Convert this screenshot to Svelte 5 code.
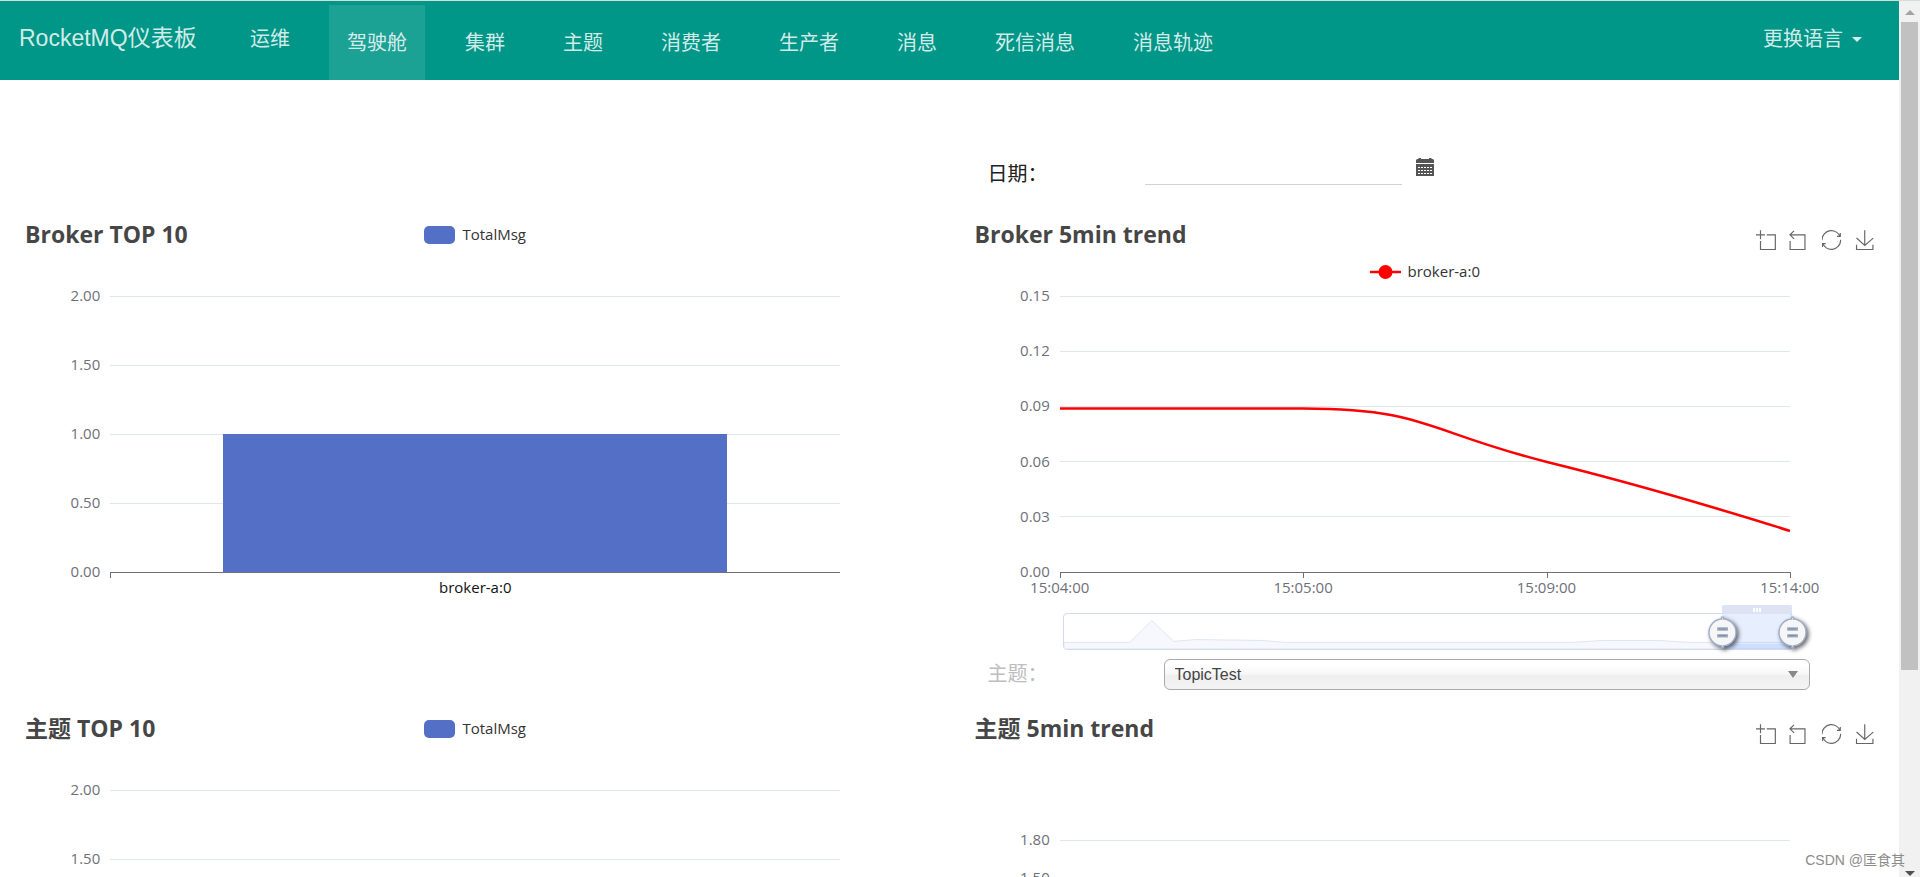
<script>
  const navItems = ['驾驶舱', '集群', '主题', '消费者', '生产者', '消息', '死信消息', '消息轨迹'];
  let active = $state('驾驶舱');
  let topic = $state('TopicTest');

  const tools = [
    { name: 'Area zoom', box: '0 -1 60 60', d: 'M0,13.5h26.9 M13.5,26.9V0 M32.1,13.5H58V58H13.5V32.1' },
    { name: 'Restore area zoom', box: '7 -1 60 60', d: 'M22,1.4L9.9,13.5l12.3,12.3 M10.3,13.5H54.9v44.6H10.3v-26' },
    {
      name: 'Restore',
      box: '2 0 60 60',
      d: 'M47,18.9h9.8V8.7 M56.3,20.1C52.1,9,40.5,0.6,26.8,2.1C12.6,3.7,1.6,16.2,2.1,30.6 M13,41.1H3.1v10.2 M3.7,39.9c4.2,11.1,15.8,19.5,29.5,18c14.2-1.6,25.2-14.1,24.7-28.5'
    },
    { name: 'Save as image', box: '0 -1 60 60', d: 'M4.7,22.9L29.3,45.5L54.7,23.4M4.6,43.6L4.6,58L53.8,58L53.8,43.6M29.2,45.1L29.2,0' }
  ];

  const barTicks = ['2.00', '1.50', '1.00', '0.50', '0.00'];
  const trendTicks = ['0.15', '0.12', '0.09', '0.06', '0.03', '0.00'];
  const topicTicks = ['1.80', '1.50', '1.20', '0.90', '0.60', '0.30', '0.00'];
  const times = ['15:04:00', '15:05:00', '15:09:00', '15:14:00'];
  const zoomRange = { start: 90.4, end: 100 };
  const handle =
    'M10.7,11.9v-1.3H9.3v1.3c-4.9,0.3-8.8,4.4-8.8,9.4c0,5,3.9,9.1,8.8,9.4v1.3h1.3v-1.3c4.9-0.3,8.8-4.4,8.8-9.4C19.5,16.3,15.6,12.2,10.7,11.9z M13.3,24.4H6.7V23h6.6V24.4z M13.3,19.6H6.7v-1.4h6.6V19.6z';
</script>

{#snippet toolbox()}
  <div class="toolbox">
    {#each tools as tool}
      <button type="button" aria-label={tool.name}>
        <svg viewBox={tool.box} width="20" height="20"><path d={tool.d} /></svg>
      </button>
    {/each}
  </div>
{/snippet}

{#snippet yLabels(ticks)}
  <div class="y-labels">
    {#each ticks as tick}<span>{tick}</span>{/each}
  </div>
{/snippet}

{#snippet gridLines(ticks)}
  {#each ticks.slice(0, -1) as _, i}
    <line x1="0" x2="730" y1={(i * 276) / (ticks.length - 1)} y2={(i * 276) / (ticks.length - 1)} class="split" />
  {/each}
{/snippet}

{#snippet barChart(title)}
  <section class="chart">
    <div class="head">
      <h2>{title}</h2>
      <div class="legend"><i class="swatch"></i><span>TotalMsg</span></div>
    </div>
    <div class="plot">
      {@render yLabels(barTicks)}
      <svg class="canvas" viewBox="0 0 730 276" preserveAspectRatio="none">
        {@render gridLines(barTicks)}
        <rect x="113" y="138" width="504" height="138" fill="#5470c6" />
        <path class="axis" d="M0,276H730M0,276V282" />
      </svg>
    </div>
    <div class="x-labels single"><span>broker-a:0</span></div>
  </section>
{/snippet}

<div class="shell">
  <div class="page">
    <nav>
      <a class="brand" href="#home">RocketMQ仪表板</a>
      <a class="item ops" href="#ops">运维</a>
      <div class="menu">
        {#each navItems as item}
          <a class="item" class:active={item === active} href="#{item}" onclick={() => (active = item)}>{item}</a>
        {/each}
      </div>
      <button class="lang" type="button">更换语言<i class="caret"></i></button>
    </nav>

    <main>
      <div class="date-row">
        <label for="date">日期：</label>
        <input id="date" type="text" />
        <svg class="calendar" viewBox="0 0 18 18" width="18" height="18">
          <path d="M0,5V2.5Q0,1 1.5,1H2.5V0H5V1H13V0H15.500V1H16.500Q18,1 18,2.500V5Z" fill="#555" />
          <path d="M0,6H18V18H0Z" fill="#555" />
          <path d="M2,9.500H16M2,12.500H16M2,15.500H16" stroke="#fff" stroke-width="1" stroke-dasharray="2 1" />
        </svg>
      </div>

      {@render barChart('Broker TOP 10')}

      <section class="chart">
        <div class="head">
          <h2>Broker 5min trend</h2>
          <div class="legend lower">
            <svg width="31" height="14" viewBox="0 0 31 14">
              <path d="M0,7H31" stroke="#f00" stroke-width="2.500" />
              <circle cx="15.500" cy="7" r="7" fill="#f00" />
            </svg>
            <span>broker-a:0</span>
          </div>
          {@render toolbox()}
        </div>
        <div class="plot">
          {@render yLabels(trendTicks)}
          <svg class="canvas" viewBox="0 0 730 276" preserveAspectRatio="none">
            {@render gridLines(trendTicks)}
            <path class="axis" d="M0,276H730M0,276V282M243,276V282M487,276V282M730,276V282" />
            <path class="trend" d="M0,112.500H243C365,112.500 365,135 487,166C609,196 730,235 730,235" />
          </svg>
        </div>
        <div class="x-labels">
          {#each times as time}<span>{time}</span>{/each}
        </div>
        <div class="zoom">
          <svg class="shadow" viewBox="0 0 730 37" preserveAspectRatio="none">
            <path
              d="M0,30H66L88,7L110,29L132,27L199,28L221,30H510L540,28L597,28L625,30H730V37H0Z"
              fill="#f6f8fd"
              stroke="#dfe5f4"
              vector-effect="non-scaling-stroke"
            />
          </svg>
          <div class="selection" style="left:{zoomRange.start}%;right:{100 - zoomRange.end}%">
            <div class="grip"><i></i><i></i><i></i></div>
          </div>
          {#each [zoomRange.start, zoomRange.end] as pos}
            <svg class="handle" style="left:{pos}%" viewBox="-3 7 28 28" width="40" height="40">
              <path d={handle} />
            </svg>
          {/each}
        </div>
      </section>

      <div class="topic-row">
        <label for="topic">主题：</label>
        <div class="select">
          <select id="topic" bind:value={topic}>
            <option>TopicTest</option>
          </select>
        </div>
      </div>

      {@render barChart('主题 TOP 10')}

      <section class="chart topic-trend">
        <div class="head">
          <h2>主题 5min trend</h2>
          {@render toolbox()}
        </div>
        <div class="plot">
          {@render yLabels(topicTicks)}
          <svg class="canvas" viewBox="0 0 730 276" preserveAspectRatio="none">
            {@render gridLines(topicTicks)}
            <path class="axis" d="M0,276H730" />
          </svg>
        </div>
      </section>
    </main>
  </div>

  <div class="scrollbar" aria-hidden="true">
    <svg width="10" height="5" viewBox="0 0 10 5"><path d="M0,5L5,0L10,5Z" fill="#a3a3a3" /></svg>
    <div class="track"><div class="thumb"></div></div>
    <svg width="10" height="5" viewBox="0 0 10 5"><path d="M0,0L5,5L10,0Z" fill="#505050" /></svg>
  </div>

  <div class="watermark">CSDN @匡食其</div>
</div>

<style>
  :global(body) {
    margin: 0;
    overflow: hidden;
    background: #fff;
  }
  .shell {
    position: relative;
    display: flex;
    height: 100vh;
    overflow: hidden;
    border-top: 1px solid #d5dcda;
    box-sizing: border-box;
    font-family: 'Open Sans', 'Noto Sans CJK SC', sans-serif;
    font-size: 15px;
    color: #333;
  }
  .page {
    flex: 1;
    min-width: 0;
    overflow: hidden;
  }
  button {
    border: 0;
    padding: 0;
    background: none;
    font: inherit;
    color: inherit;
  }

  nav {
    display: flex;
    align-items: flex-start;
    height: 79px;
    background: #009688;
    font-family: 'Liberation Sans', 'Noto Sans CJK SC', sans-serif;
    font-size: 20px;
    line-height: 76px;
    color: rgba(255, 255, 255, 0.84);
  }
  nav a {
    color: inherit;
    text-decoration: none;
    white-space: nowrap;
  }
  .brand {
    width: 212px;
    padding-left: 19px;
    box-sizing: border-box;
    font-size: 23px;
    line-height: 74px;
  }
  .item {
    padding: 0 18px;
  }
  .ops {
    margin: 0 21px 0 20px;
  }
  .menu {
    display: flex;
    gap: 22px;
    padding-top: 4px;
  }
  .menu .item {
    height: 75px;
  }
  .active {
    background: rgba(255, 255, 255, 0.11);
  }
  .lang {
    display: flex;
    align-items: center;
    gap: 9px;
    margin-left: auto;
    padding-right: 37px;
  }
  .caret {
    border: 5px solid transparent;
    border-top-color: rgba(255, 255, 255, 0.84);
    border-bottom: 0;
  }

  main {
    display: grid;
    grid-template-columns: 1fr 1fr;
    grid-template-rows: 141px 426px 68px auto;
  }
  .date-row,
  .topic-row {
    grid-column: 2;
    display: flex;
    align-items: flex-start;
    padding-left: 38px;
    font-family: 'Liberation Sans', 'Noto Sans CJK SC', sans-serif;
    font-size: 20px;
    line-height: 32px;
  }
  .date-row {
    padding-top: 78px;
  }
  .date-row label {
    width: 157px;
    color: #212121;
  }
  .date-row input {
    width: 257px;
    height: 26px;
    margin-right: 14px;
    padding: 0;
    border: 0;
    border-bottom: 1px solid #d2d2d2;
    background: none;
    outline: 0;
    font: inherit;
  }
  .topic-row {
    padding-top: 12px;
    padding-right: 89px;
  }
  .topic-row label {
    width: 176px;
    line-height: 30px;
    color: #bdbdbd;
  }
  .select {
    position: relative;
    flex: 1;
  }
  .select::after {
    content: '';
    position: absolute;
    right: 12px;
    top: 12px;
    border: 5px solid transparent;
    border-top: 7px solid #888;
    border-bottom: 0;
    pointer-events: none;
  }
  select {
    display: block;
    width: 100%;
    height: 31px;
    padding: 0 10px;
    appearance: none;
    border: 1px solid #aaa;
    border-radius: 6px;
    background: linear-gradient(#fff 20%, #f6f6f6 50%, #eee 52%, #f4f4f4 100%);
    font-family: 'Liberation Sans', sans-serif;
    font-size: 16px;
    color: #444;
  }

  .chart {
    min-width: 0;
    margin: 0 18px 0 19px;
  }
  .head {
    display: grid;
    grid-template-columns: 1fr auto 1fr;
    align-items: start;
    height: 75px;
  }
  h2 {
    margin: 0;
    padding-left: 6px;
    font-size: 23px;
    font-weight: 700;
    line-height: 26px;
    white-space: nowrap;
    color: #464646;
  }
  .legend {
    display: flex;
    align-items: center;
    gap: 7px;
    height: 28px;
  }
  .legend span {
    padding-bottom: 2px;
  }
  .lower {
    margin-top: 37px;
  }
  .swatch {
    width: 31px;
    height: 18px;
    border-radius: 5px;
    background: #5470c6;
  }
  .toolbox {
    grid-column: 3;
    display: flex;
    justify-content: flex-end;
    gap: 13px;
    padding: 9px 6px 0 0;
  }
  .toolbox svg {
    display: block;
    fill: none;
    stroke: #666;
    stroke-width: 3.500;
  }
  .plot {
    display: grid;
    grid-template-columns: 10% 80% 10%;
    height: 276px;
  }
  .y-labels {
    display: flex;
    flex-direction: column;
    justify-content: space-between;
    margin: -1px 0 1px;
    padding-right: 10px;
    text-align: right;
    color: #6e7079;
  }
  .y-labels span {
    display: flex;
    align-items: center;
    justify-content: flex-end;
    height: 0;
  }
  .canvas {
    display: block;
    width: 100%;
    height: 100%;
    min-height: 0;
    overflow: visible;
  }
  .split {
    stroke: #e0e6f1;
    vector-effect: non-scaling-stroke;
    shape-rendering: crispEdges;
  }
  .axis {
    fill: none;
    stroke: #6e7079;
    vector-effect: non-scaling-stroke;
    shape-rendering: crispEdges;
  }
  .trend {
    fill: none;
    stroke: #f00;
    stroke-width: 2.500;
    vector-effect: non-scaling-stroke;
  }
  .x-labels {
    display: flex;
    justify-content: space-between;
    padding: 4px 10% 0;
    line-height: 22px;
    white-space: nowrap;
    color: #6e7079;
  }
  .x-labels span {
    display: flex;
    justify-content: center;
    width: 0;
  }
  .x-labels.single {
    justify-content: center;
    color: #111;
  }
  .zoom {
    position: relative;
    box-sizing: border-box;
    width: 80%;
    height: 37px;
    margin: 15px 0 0 calc(10% + 3px);
    border: 1px solid #d2dbee;
    border-radius: 4px;
  }
  .shadow {
    display: block;
    width: 100%;
    height: 35px;
  }
  .selection {
    position: absolute;
    top: -9px;
    bottom: 0;
    background: linear-gradient(rgba(135, 175, 255, 0.2) 39px, rgba(135, 175, 255, 0.36) 39px);
  }
  .grip {
    display: flex;
    align-items: center;
    justify-content: center;
    gap: 1px;
    height: 9px;
    border-radius: 3px 3px 0 0;
    background: #dde3f3;
  }
  .grip i {
    width: 2px;
    height: 4px;
    background: #fff;
  }
  .handle {
    position: absolute;
    top: -2px;
    margin-left: -18px;
    overflow: visible;
    filter: drop-shadow(2px 2px 2px rgba(0, 0, 0, 0.6));
  }
  .handle path {
    fill: #f6f6f6;
    stroke: #9fadc9;
  }
  .topic-trend .plot {
    height: 226px;
  }
  .topic-trend .head {
    height: 125px;
  }

  .scrollbar {
    display: flex;
    flex-direction: column;
    align-items: center;
    box-sizing: border-box;
    width: 21px;
    padding: 9px 2px 1px;
    background: #f1f1f1;
  }
  .track {
    flex: 1;
    width: 17px;
    padding: 7px 0;
  }
  .thumb {
    height: 77%;
    background: #c1c1c1;
  }
  .watermark {
    position: absolute;
    right: 15px;
    bottom: 7px;
    font-family: 'Liberation Sans', 'Noto Sans CJK SC', sans-serif;
    font-size: 14px;
    line-height: 20px;
    color: #8c8c8c;
  }
</style>
